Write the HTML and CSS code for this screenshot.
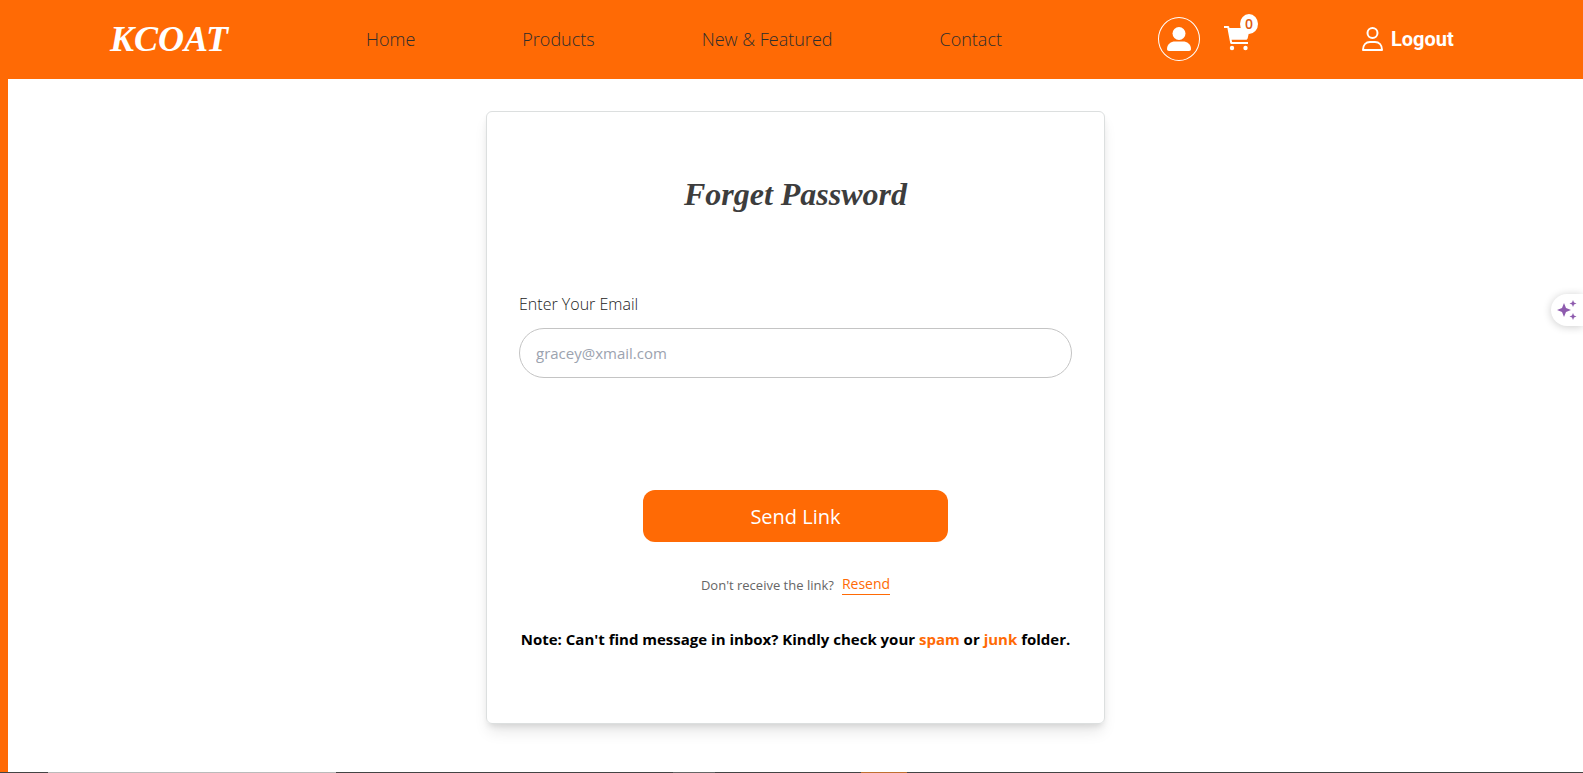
FILE: index.html
```html
<!DOCTYPE html>
<html lang="en">
<head>
<meta charset="utf-8">
<meta name="viewport" content="width=device-width, initial-scale=1">
<title>KCOAT - Forget Password</title>
<link rel="stylesheet" href="styles.css">
</head>
<body>
<header class="header">
  <a class="logo" href="#">KCOAT</a>
  <nav class="nav">
    <a href="#">Home</a>
    <a href="#">Products</a>
    <a href="#">New &amp; Featured</a>
    <a href="#">Contact</a>
  </nav>
  <div class="actions">
    <a class="profile" href="#" aria-label="Profile">
      <svg width="24" height="24" viewBox="0 0 24 24" fill="currentColor"><circle cx="12" cy="6.5" r="6.5"/><path d="M0 22c0-5 4-7.500 8-7.500h8c4 0 8 2.500 8 7.500 0 1.300-.7 2-2 2H2c-1.300 0-2-.7-2-2z"/></svg>
    </a>
    <a class="cart" href="#" aria-label="Cart">
      <svg width="26" height="25" viewBox="0 0 26 25" fill="currentColor"><path d="M0 0h4.200c.5 0 .9.300 1 .8L5.400 2H26l-2.300 10.200c-.2.900-.9 1.500-1.800 1.500H7.600l.5 2.300H24v2H7.400c-.6 0-1-.4-1.200-1L3.400 2H0z"/><circle cx="8" cy="22" r="2.200"/><circle cx="21.500" cy="22" r="2.200"/></svg>
      <span class="badge">0</span>
    </a>
  </div>
  <button class="logout" type="button">
    <svg width="21" height="24" viewBox="0 0 21 24" fill="none" stroke="currentColor" stroke-width="2"><circle cx="10.500" cy="6" r="5"/><path d="M1 22.900C1 18 4 15 8 15h5c4 0 7 3 7 7.900z" stroke-linejoin="round"/></svg>
    <span>Logout</span>
  </button>
</header>
<main class="main">
  <form class="card">
    <h1 class="title">Forget Password</h1>
    <label class="label" for="email">Enter Your Email</label>
    <input class="input" id="email" type="email" placeholder="gracey@xmail.com">
    <button class="send" type="button">Send Link</button>
    <p class="resend">Don't receive the link? <a href="#">Resend</a></p>
    <p class="note">Note: Can't find message in inbox? Kindly check your <span>spam</span> or <span>junk</span> folder.</p>
  </form>
</main>
<button class="assistant" type="button" aria-label="Assistant">
  <svg width="20" height="20" viewBox="0 0 20 20" fill="currentColor"><path d="M7 3l2 5 5 2-5 2-2 5-2-5-5-2 5-2zM16 0l1 2.500 2.500 1-2.500 1L16 7l-1-2.500-2.500-1 2.500-1zM16 13l1 2.500 2.500 1-2.500 1-1 2.500-1-2.500-2.500-1 2.500-1z"/></svg>
</button>
<div class="edge"></div>
</body>
</html>
```
FILE: styles.css
```css
* { box-sizing: border-box; }
body {
  margin: 0;
  min-height: 100vh;
  display: flex;
  flex-direction: column;
  background: #fff;
  font-family: "Open Sans", "Noto Sans", sans-serif;
  font-size: 16px;
}
a { color: inherit; text-decoration: none; }
button { font: inherit; border: 0; padding: 0; cursor: pointer; }
svg { display: block; }
.header {
  display: grid;
  grid-template-columns: 256fr 792fr 204fr 92fr;
  align-items: center;
  height: 79px;
  padding: 0 129px 2px 110px;
  background: #ff6a05;
  color: #fff;
}
.logo {
  font: italic bold 36px/40px "Liberation Serif", serif;
}
.nav {
  display: flex;
  gap: 107px;
  color: #2d2d2d;
  font-size: 18px;
  font-weight: 300;
  white-space: nowrap;
}
.actions { display: flex; align-items: center; gap: 24px; }
.profile {
  display: grid;
  place-items: center;
  width: 42px;
  height: 44px;
  border: 1px solid #fff;
  border-radius: 50%;
}
.cart { position: relative; }
.badge {
  position: absolute;
  top: -12px;
  left: 16px;
  width: 18px;
  height: 20px;
  border-radius: 50%;
  background: #fff;
  color: #e05a10;
  font-size: 14px;
  font-weight: 600;
  line-height: 20px;
  text-align: center;
}
.logout {
  display: flex;
  align-items: center;
  gap: 8px;
  background: none;
  color: #fff;
  font: bold 20px/24px Roboto, sans-serif;
}
.main {
  flex: 1;
  padding: 32px 16px 48px;
  border-left: 8px solid #ff6a05;
}
.card {
  display: flex;
  flex-direction: column;
  max-width: 619px;
  margin: 0 auto;
  padding: 58px 32px 72px;
  border: 1px solid #dcdfdf;
  border-radius: 6px;
  box-shadow: 0 10px 15px -3px rgba(0, 0, 0, .1), 0 4px 6px -2px rgba(0, 0, 0, .1);
}
.title {
  margin: 0 0 74px;
  color: #3d3d3d;
  font: italic bold 32px/48px "Liberation Serif", serif;
  text-align: center;
}
.label {
  margin-bottom: 12px;
  color: #222;
  font-weight: 300;
  line-height: 24px;
}
.input {
  width: 100%;
  height: 50px;
  padding: 0 16px;
  border: 1px solid #c4c4c4;
  border-radius: 25px;
  background: #fff;
  font: inherit;
  font-size: 15px;
}
.input::placeholder { color: #9ca3af; opacity: 1; }
.send {
  align-self: center;
  width: 55%;
  height: 52px;
  margin: 112px 0 32px;
  border-radius: 12px;
  background: #ff6a05;
  color: #fff;
  font-size: 20px;
}
.resend {
  display: flex;
  justify-content: center;
  align-items: center;
  gap: 8px;
  margin: 0 0 32px;
  color: #666;
  font-size: 13px;
  line-height: 20px;
}
.resend a {
  border-bottom: 1px solid #ff6a05;
  color: #ff6a05;
  font-size: 14px;
}
.note {
  margin: 0 -8px;
  color: #000;
  font-size: 15px;
  font-weight: 700;
  line-height: 24px;
  text-align: center;
}
.note span { color: #ff6a05; }
.assistant {
  position: fixed;
  top: 294px;
  right: 0;
  width: 32px;
  height: 32px;
  padding-left: 6px;
  border-radius: 16px 0 0 16px;
  background: #fff;
  color: #8e5bae;
  box-shadow: 0 1px 8px rgba(0, 0, 0, .2);
}
.edge {
  position: fixed;
  right: 0;
  bottom: 0;
  left: 0;
  height: 1px;
  background: linear-gradient(to right, #444 48px, #bbb 48px 336px, #444 336px 673px, #666 673px 715px, #444 715px 861px, #c07030 861px 907px, #444 907px);
}
```
